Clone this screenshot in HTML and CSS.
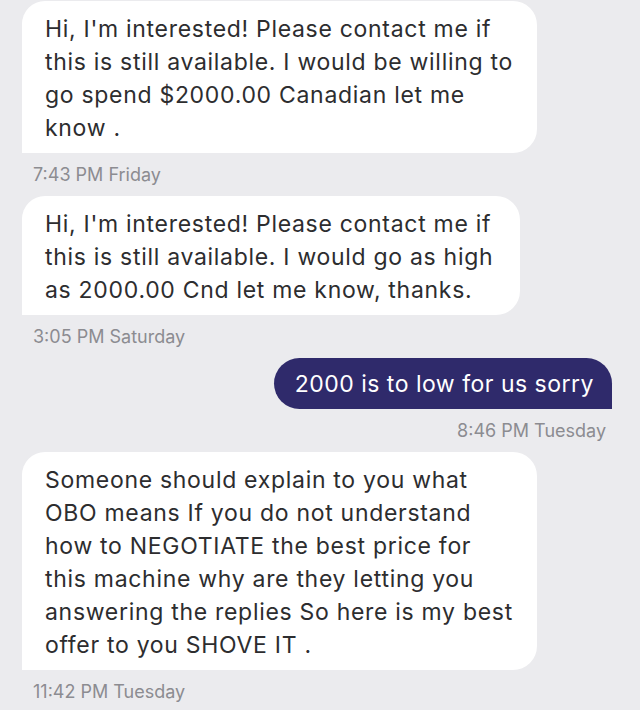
FILE: index.html
```html
<!DOCTYPE html>
<html lang="en">
<head>
<meta charset="utf-8">
<title>Messages</title>
<link rel="stylesheet" href="styles.css">
</head>
<body>
<main class="thread">
  <div class="msg msg--in">
    <div class="bubble bubble--in">Hi, I'm interested! Please contact me if this is still available. I would be willing to go spend $2000.00 Canadian let me know .</div>
    <div class="time">7:43 PM Friday</div>
  </div>
  <div class="msg msg--in">
    <div class="bubble bubble--in bubble--narrow">Hi, I'm interested! Please contact me if this is still available. I would go as high as 2000.00 Cnd let me know, thanks.</div>
    <div class="time">3:05 PM Saturday</div>
  </div>
  <div class="msg msg--out">
    <div class="bubble bubble--out">2000 is to low for us sorry</div>
    <div class="time time--out">8:46 PM Tuesday</div>
  </div>
  <div class="msg msg--in">
    <div class="bubble bubble--in">Someone should explain to you what OBO means If you do not understand how to NEGOTIATE the best price for this machine why are they letting you answering the replies So here is my best offer to you SHOVE IT .</div>
    <div class="time">11:42 PM Tuesday</div>
  </div>
</main>
</body>
</html>
```
FILE: styles.css
```css
html, body {
  margin: 0;
  padding: 0;
  background: #ebebee;
}

body {
  font-family: Inter, Roboto, "Liberation Sans", sans-serif;
  width: 640px;
  height: 710px;
  overflow: hidden;
}

.thread {
  display: flex;
  flex-direction: column;
  gap: 9px;
  padding: 1px 28px 0 22px;
}

.msg {
  display: flex;
  flex-direction: column;
}

.msg--in {
  align-items: flex-start;
}

.msg--out {
  align-items: flex-end;
}

.bubble {
  font-size: 23px;
  line-height: 33px;
  letter-spacing: 0.7px;
  color: #2d2d2f;
  box-sizing: border-box;
}

.bubble--in {
  background: #ffffff;
  width: 515px;
  padding: 12px 20px 8px 23px;
  border-radius: 23px 24px 24px 0;
}

.bubble--narrow {
  width: 498px;
}

.bubble--out {
  background: #2f2a6b;
  color: #ffffff;
  letter-spacing: 0.5px;
  padding: 10px 18px 8px 21px;
  border-radius: 26px 26px 0 26px;
}

.time {
  margin-top: 10px;
  margin-left: 11px;
  font-size: 18px;
  line-height: 24px;
  color: #8c8c91;
}

.time--out {
  margin-left: 0;
  margin-right: 6px;
}
```
